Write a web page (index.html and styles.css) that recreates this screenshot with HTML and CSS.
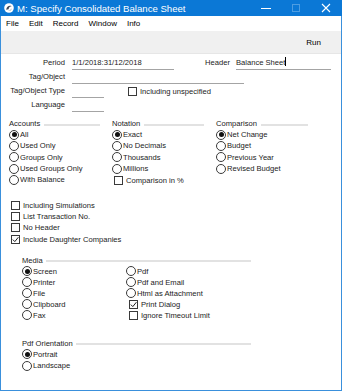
FILE: index.html
```html
<!DOCTYPE html>
<html lang="en">
<head>
    <meta charset="UTF-8">
    <title>M: Specify Consolidated Balance Sheet</title>
    <link rel="stylesheet" href="styles.css">
</head>
<body>

    <div class="window">
        <div class="titlebar">
            <svg class="app-icon" width="10" height="10" viewBox="0 0 10 10">
                <circle cx="5" cy="5" r="4.8" fill="#fff"/>
                <path d="M2.2 6.8 C2.6 3.6 5.2 2 7.6 3.2 C6 3.2 4.8 4.4 4.6 6.2 Z" fill="#3a4658"/>
                <path d="M4.4 7.6 C6 7.8 7.4 6.6 7.8 5 C7.6 7 6 8.4 4.4 7.6 Z" fill="#3a4658"/>
            </svg>
            <span class="title">M: Specify Consolidated Balance Sheet</span>
            <div class="controls">
                <svg width="10" height="10" viewBox="0 0 10 10"><path d="M0 5.5 H10" stroke="#fff" stroke-width="1"/></svg>
                <svg width="10" height="10" viewBox="0 0 10 10"><rect x="1.5" y="1.5" width="7" height="7" fill="none" stroke="#4d9de2" stroke-width="1"/></svg>
                <svg width="10" height="10" viewBox="0 0 10 10"><path d="M1 1 L9 9 M9 1 L1 9" stroke="#fff" stroke-width="1.1"/></svg>
            </div>
        </div>

        <div class="menubar">
            <span>File</span>
            <span>Edit</span>
            <span>Record</span>
            <span>Window</span>
            <span>Info</span>
        </div>

        <div class="toolbar">
            <span class="run">Run</span>
        </div>

        <div class="content">
            <!-- header fields -->
            <div class="form-row">
                <label class="lbl">Period</label>
                <span class="field w-period">1/1/2018:31/12/2018</span>
                <label class="lbl lbl-header">Header</label>
                <span class="field w-header">Balance Sheet<i class="caret"></i></span>
            </div>
            <div class="form-row">
                <label class="lbl">Tag/Object</label>
                <span class="field w-tag"></span>
            </div>
            <div class="form-row">
                <label class="lbl">Tag/Object Type</label>
                <span class="field w-short"></span>
                <span class="check inline-check"><i class="box"></i>Including unspecified</span>
            </div>
            <div class="form-row">
                <label class="lbl">Language</label>
                <span class="field w-short"></span>
            </div>

            <!-- option groups -->
            <div class="groups">
                <div class="group">
                    <div class="heading"><span>Accounts</span><i class="rule"></i></div>
                    <div class="radio on"><i class="dot"></i>All</div>
                    <div class="radio"><i class="dot"></i>Used Only</div>
                    <div class="radio"><i class="dot"></i>Groups Only</div>
                    <div class="radio"><i class="dot"></i>Used Groups Only</div>
                    <div class="radio"><i class="dot"></i>With Balance</div>
                </div>
                <div class="group">
                    <div class="heading"><span>Notation</span><i class="rule"></i></div>
                    <div class="radio on"><i class="dot"></i>Exact</div>
                    <div class="radio"><i class="dot"></i>No Decimals</div>
                    <div class="radio"><i class="dot"></i>Thousands</div>
                    <div class="radio"><i class="dot"></i>Millions</div>
                    <div class="check group-check"><i class="box"></i>Comparison in %</div>
                </div>
                <div class="group">
                    <div class="heading"><span>Comparison</span><i class="rule"></i></div>
                    <div class="radio on"><i class="dot"></i>Net Change</div>
                    <div class="radio"><i class="dot"></i>Budget</div>
                    <div class="radio"><i class="dot"></i>Previous Year</div>
                    <div class="radio"><i class="dot"></i>Revised Budget</div>
                </div>
            </div>

            <div class="checks">
                <div class="check"><i class="box"></i>Including Simulations</div>
                <div class="check"><i class="box"></i>List Transaction No.</div>
                <div class="check"><i class="box"></i>No Header</div>
                <div class="check"><i class="box ticked"></i>Include Daughter Companies</div>
            </div>

            <!-- output -->
            <div class="section media">
                <div class="heading"><span>Media</span><i class="rule"></i></div>
                <div class="media-cols">
                    <div class="media-col">
                        <div class="radio on"><i class="dot"></i>Screen</div>
                        <div class="radio"><i class="dot"></i>Printer</div>
                        <div class="radio"><i class="dot"></i>File</div>
                        <div class="radio"><i class="dot"></i>Clipboard</div>
                        <div class="radio"><i class="dot"></i>Fax</div>
                    </div>
                    <div class="media-col">
                        <div class="radio"><i class="dot"></i>Pdf</div>
                        <div class="radio"><i class="dot"></i>Pdf and Email</div>
                        <div class="radio"><i class="dot"></i>Html as Attachment</div>
                        <div class="check media-check"><i class="box ticked"></i>Print Dialog</div>
                        <div class="check media-check"><i class="box"></i>Ignore Timeout Limit</div>
                    </div>
                </div>
            </div>

            <div class="section orientation">
                <div class="heading"><span>Pdf Orientation</span><i class="rule"></i></div>
                <div class="radio on"><i class="dot"></i>Portrait</div>
                <div class="radio"><i class="dot"></i>Landscape</div>
            </div>
        </div>
    </div>

</body>
</html>
```

FILE: styles.css
```css
body {
    margin: 0;
    font-family: "Liberation Sans", Arial, sans-serif;
    font-size: 7.6px;
    color: #1b1b1b;
    background-color: #fff;
}

.window {
    width: 342px;
    height: 391px;
    box-sizing: border-box;
    border: 1px solid #3a90dc;
    border-top: none;
    display: flex;
    flex-direction: column;
}

/* title bar */
.titlebar {
    height: 16px;
    margin: 0 -1px;
    background-color: #0b78d6;
    display: flex;
    align-items: center;
    color: #fff;
}

.app-icon {
    margin-left: 4px;
}

.title {
    margin-left: 3px;
    font-size: 9.6px;
}

.controls {
    margin-left: auto;
    display: flex;
    gap: 20px;
    margin-right: 11px;
}

/* menu */
.menubar {
    height: 15px;
    display: flex;
    align-items: center;
    padding-left: 5px;
    gap: 10px;
    font-size: 8px;
    color: #000;
}

.toolbar {
    height: 22px;
    background-color: #f0f0f0;
    border-bottom: 1px solid #e6e6e6;
    display: flex;
    align-items: center;
    justify-content: flex-end;
    padding-right: 20px;
}

.run {
    font-size: 8px;
    color: #000;
}

/* content */
.content {
    padding: 3px 0 0 8px;
    flex: 1;
}

.form-row {
    display: flex;
    align-items: flex-start;
    height: 14px;
}

.lbl {
    width: 56px;
    text-align: right;
    line-height: 12px;
    margin-right: 7px;
    color: #222;
}

.lbl-header {
    width: 56px;
    margin-right: 6px;
}

.field {
    display: block;
    height: 12px;
    line-height: 12px;
    border-bottom: 1px solid #a4a4a4;
    position: relative;
}

.w-period { width: 102px; }
.w-header { width: 95px; }
.w-tag { width: 172px; }
.w-short { width: 32px; }

.caret {
    display: inline-block;
    width: 1px;
    height: 9px;
    background-color: #000;
    vertical-align: -1px;
}

/* radios and checks */
.radio, .check {
    display: flex;
    align-items: center;
    height: 11.3px;
    white-space: nowrap;
}

.dot {
    width: 10px;
    height: 10px;
    box-sizing: border-box;
    border: 1px solid #3a3a3a;
    border-radius: 50%;
    margin-right: 1px;
    flex: none;
    display: flex;
    align-items: center;
    justify-content: center;
    background-color: #fff;
}

.radio.on .dot::after {
    content: "";
    width: 5px;
    height: 5px;
    border-radius: 50%;
    background-color: #111;
}

.box {
    width: 9px;
    height: 9px;
    box-sizing: border-box;
    border: 1px solid #3a3a3a;
    margin-right: 3px;
    flex: none;
    background-color: #fff;
}

.box.ticked {
    background: #fff url("data:image/svg+xml,%3Csvg xmlns='http://www.w3.org/2000/svg' width='7' height='7' viewBox='0 0 7 7'%3E%3Cpath d='M0.8 3.6 L2.8 5.6 L6.4 1.2' fill='none' stroke='%23222' stroke-width='1'/%3E%3C/svg%3E") no-repeat center;
}

.inline-check {
    margin-left: 24px;
    height: 14px;
    margin-top: -1px;
}

/* groups */
.groups {
    display: flex;
    margin-top: 5px;
}

.group {
    width: 103px;
}

.group + .group {
    width: 104px;
}

.heading {
    display: flex;
    align-items: center;
    height: 11px;
    color: #222;
}

.rule {
    flex: 1;
    height: 2px;
    margin: 2px 12px 0 4px;
    background-color: #e2e2e2;
}

.group-check {
    margin-left: 2px;
    height: 12px;
}

.checks {
    margin-top: 14px;
    padding-left: 2px;
}

.checks .check {
    height: 11.1px;
}

.section {
    margin-left: 13px;
    width: 229px;
}

.section .rule {
    margin-right: 0;
    margin-left: 3px;
}

.media {
    margin-top: 10px;
}

.media-cols {
    display: flex;
}

.media-col {
    width: 104px;
}

.media-col .radio, .media-col .check {
    height: 11px;
}

.media-check {
    padding-left: 3px;
}

.orientation {
    margin-top: 17px;
}
```
